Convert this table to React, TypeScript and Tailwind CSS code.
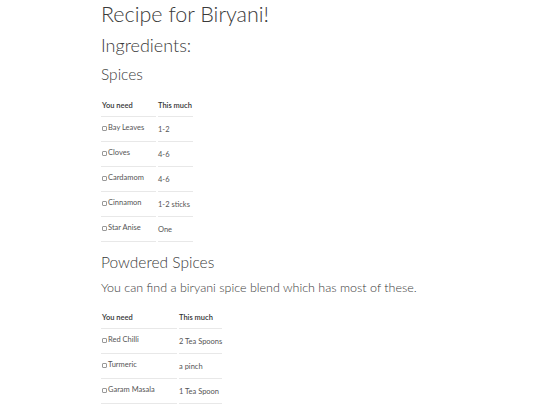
import React from 'react'

interface Item {
  name: string
  amount: string
}

const spices: Item[] = [
  { name: 'Bay Leaves', amount: '1-2' },
  { name: 'Cloves', amount: '4-6' },
  { name: 'Cardamom', amount: '4-6' },
  { name: 'Cinnamon', amount: '1-2 sticks' },
  { name: 'Star Anise', amount: 'One' },
]

const powdered: Item[] = [
  { name: 'Red Chilli', amount: '2 Tea Spoons' },
  { name: 'Turmeric', amount: 'a pinch' },
  { name: 'Garam Masala', amount: '1 Tea Spoon' },
]

function IngredientTable({ items, col1, col2 }: { items: Item[]; col1: string; col2: string }) {
  return (
    <div className="text-[7.5px] text-[#555] whitespace-nowrap">
      {/* header */}
      <div className="flex gap-[2px] h-[22px]">
        <div className={`${col1} border-b border-[#e8e8e8] flex items-center pl-[1px] font-semibold text-[#333]`}>
          You need
        </div>
        <div className={`${col2} border-b border-[#e8e8e8] flex items-center font-semibold text-[#333]`}>
          This much
        </div>
      </div>
      {items.map((item) => (
        <div key={item.name} className="flex gap-[2px] h-[25px]">
          <div className={`${col1} border-b border-[#e8e8e8] flex items-center pl-[1px] pb-[2px]`}>
            <span className="inline-block w-[5px] h-[5px] border border-[#999] rounded-[1px] mr-[1px]" />
            {item.name}
          </div>
          <div className={`${col2} border-b border-[#e8e8e8] flex items-center pt-[2px]`}>
            {item.amount}
          </div>
        </div>
      ))}
    </div>
  )
}

export default function App() {
  return (
    <div className="min-h-screen bg-white pl-[101px] text-[#3a3a3a] font-['Lato','Open_Sans',sans-serif]">
      <h1 className="text-[21.5px] font-light leading-[28px]">Recipe for Biryani!</h1>
      <h2 className="text-[18px] font-light leading-[22px] mt-[6px]">Ingredients:</h2>
      <h3 className="text-[15.5px] font-light leading-[20px] mt-[8px]">Spices</h3>
      <div className="mt-[11px]">
        <IngredientTable items={spices} col1="w-[55px]" col2="w-[35px]" />
      </div>
      <h3 className="text-[15.5px] font-light leading-[20px] mt-[10px]">Powdered Spices</h3>
      <p className="text-[12.5px] font-light leading-[18px] mt-[7px]">
        You can find a biryani spice blend which has most of these.
      </p>
      <div className="mt-[10px]">
        <IngredientTable items={powdered} col1="w-[76px]" col2="w-[43px]" />
      </div>
    </div>
  )
}
